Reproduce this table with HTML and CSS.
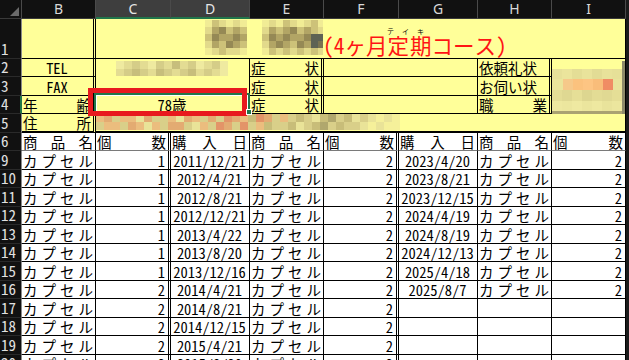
FILE: index.html
```html
<!DOCTYPE html>
<html lang="ja">
<head>
<meta charset="utf-8">
<title>Sheet</title>
<link rel="stylesheet" href="styles.css">
</head>
<body>
<div class="sheet">
  <!-- column headers -->
  <div class="ch corner"><svg width="22" height="19" viewBox="0 0 22 19"><polygon points="19,7 19,16 10,16" fill="#6b6b6b"/></svg></div>
  <div class="c ch">B</div>
  <div class="c ch sel">C</div>
  <div class="c ch sel">D</div>
  <div class="c ch">E</div>
  <div class="c ch">F</div>
  <div class="c ch">G</div>
  <div class="c ch">H</div>
  <div class="c ch">I</div>

  <!-- row 1 -->
  <div class="c rh">1</div>
  <div class="c y bd bb"></div>
  <div class="c y bb br span7 title-cell">
    <svg class="mosaic" width="227" height="38" viewBox="0 0 227 38" shape-rendering="crispEdges">
      <g>
        <rect x="109" y="1" width="7" height="7" fill="#f1ec95"/><rect x="116" y="1" width="7" height="7" fill="#cdc279"/><rect x="123" y="1" width="7" height="7" fill="#e2da8b"/><rect x="130" y="1" width="7" height="7" fill="#f1ec95"/><rect x="137" y="1" width="7" height="7" fill="#e2da8b"/><rect x="144" y="1" width="7" height="7" fill="#f1ec95"/>
        <rect x="109" y="8" width="7" height="7" fill="#e2da8b"/><rect x="116" y="8" width="7" height="7" fill="#b2a565"/><rect x="123" y="8" width="7" height="7" fill="#958955"/><rect x="130" y="8" width="7" height="7" fill="#cdc279"/><rect x="137" y="8" width="7" height="7" fill="#b2a565"/><rect x="144" y="8" width="7" height="7" fill="#cdc279"/>
        <rect x="109" y="15" width="7" height="7" fill="#cdc279"/><rect x="116" y="15" width="7" height="7" fill="#958955"/><rect x="123" y="15" width="7" height="7" fill="#b2a565"/><rect x="130" y="15" width="7" height="7" fill="#b2a565"/><rect x="137" y="15" width="7" height="7" fill="#958955"/><rect x="144" y="15" width="7" height="7" fill="#b2a565"/>
        <rect x="109" y="22" width="7" height="7" fill="#e2da8b"/><rect x="116" y="22" width="7" height="7" fill="#b2a565"/><rect x="123" y="22" width="7" height="7" fill="#cdc279"/><rect x="130" y="22" width="7" height="7" fill="#958955"/><rect x="137" y="22" width="7" height="7" fill="#b2a565"/><rect x="144" y="22" width="7" height="7" fill="#cdc279"/>
        <rect x="109" y="29" width="7" height="7" fill="#f1ec95"/><rect x="116" y="29" width="7" height="7" fill="#e2da8b"/><rect x="123" y="29" width="7" height="7" fill="#cdc279"/><rect x="130" y="29" width="7" height="7" fill="#e2da8b"/><rect x="137" y="29" width="7" height="7" fill="#e2da8b"/><rect x="144" y="29" width="7" height="7" fill="#f1ec95"/>
      </g>
      <g>
        <rect x="166" y="1" width="7" height="7" fill="#f1ec95"/><rect x="173" y="1" width="7" height="7" fill="#e2da8b"/><rect x="180" y="1" width="7" height="7" fill="#f1ec95"/><rect x="187" y="1" width="7" height="7" fill="#cdc279"/><rect x="194" y="1" width="7" height="7" fill="#e2da8b"/><rect x="201" y="1" width="7" height="7" fill="#f1ec95"/><rect x="208" y="1" width="7" height="7" fill="#e2da8b"/><rect x="215" y="1" width="7" height="7" fill="#cdc279"/><rect x="222" y="1" width="5" height="7" fill="#f1ec95"/>
        <rect x="166" y="8" width="7" height="7" fill="#e2da8b"/><rect x="173" y="8" width="7" height="7" fill="#b2a565"/><rect x="180" y="8" width="7" height="7" fill="#cdc279"/><rect x="187" y="8" width="7" height="7" fill="#b2a565"/><rect x="194" y="8" width="7" height="7" fill="#958955"/><rect x="201" y="8" width="7" height="7" fill="#cdc279"/><rect x="208" y="8" width="7" height="7" fill="#b2a565"/><rect x="215" y="8" width="7" height="7" fill="#cdc279"/><rect x="222" y="8" width="5" height="7" fill="#e2da8b"/>
        <rect x="166" y="15" width="7" height="7" fill="#cdc279"/><rect x="173" y="15" width="7" height="7" fill="#958955"/><rect x="180" y="15" width="7" height="7" fill="#b2a565"/><rect x="187" y="15" width="7" height="7" fill="#958955"/><rect x="194" y="15" width="7" height="7" fill="#b2a565"/><rect x="201" y="15" width="7" height="7" fill="#b2a565"/><rect x="208" y="15" width="7" height="7" fill="#958955"/><rect x="215" y="15" width="7" height="7" fill="#5e6254"/><rect x="222" y="15" width="5" height="7" fill="#5e6254"/>
        <rect x="166" y="22" width="7" height="7" fill="#e2da8b"/><rect x="173" y="22" width="7" height="7" fill="#b2a565"/><rect x="180" y="22" width="7" height="7" fill="#958955"/><rect x="187" y="22" width="7" height="7" fill="#b2a565"/><rect x="194" y="22" width="7" height="7" fill="#cdc279"/><rect x="201" y="22" width="7" height="7" fill="#958955"/><rect x="208" y="22" width="7" height="7" fill="#b2a565"/><rect x="215" y="22" width="7" height="7" fill="#5e6254"/><rect x="222" y="22" width="5" height="7" fill="#7a7350"/>
        <rect x="166" y="29" width="7" height="7" fill="#f1ec95"/><rect x="173" y="29" width="7" height="7" fill="#cdc279"/><rect x="180" y="29" width="7" height="7" fill="#e2da8b"/><rect x="187" y="29" width="7" height="7" fill="#cdc279"/><rect x="194" y="29" width="7" height="7" fill="#e2da8b"/><rect x="201" y="29" width="7" height="7" fill="#cdc279"/><rect x="208" y="29" width="7" height="7" fill="#e2da8b"/><rect x="215" y="29" width="7" height="7" fill="#cdc279"/><rect x="222" y="29" width="5" height="7" fill="#e2da8b"/>
      </g>
    </svg>
    <span class="title">(4ヶ月<ruby>定期<rt>テイキ</rt></ruby>コース)</span>
  </div>

  <!-- row 2 -->
  <div class="c rh">2</div>
  <div class="c y bd bb ctr">TEL</div>
  <div class="c y br span2 m">
    <svg width="153" height="18" viewBox="0 0 153 18" shape-rendering="crispEdges">
      <rect x="20" y="2" width="8" height="8" fill="#efeaa0"/><rect x="28" y="2" width="8" height="8" fill="#e3dc93"/><rect x="36" y="2" width="8" height="8" fill="#d5cd88"/><rect x="44" y="2" width="8" height="8" fill="#e3dc93"/><rect x="52" y="2" width="8" height="8" fill="#efeaa0"/><rect x="60" y="2" width="8" height="8" fill="#d5cd88"/><rect x="68" y="2" width="8" height="8" fill="#e3dc93"/><rect x="76" y="2" width="8" height="8" fill="#c7be7c"/><rect x="84" y="2" width="8" height="8" fill="#e3dc93"/><rect x="92" y="2" width="8" height="8" fill="#d5cd88"/><rect x="100" y="2" width="8" height="8" fill="#efeaa0"/><rect x="108" y="2" width="8" height="8" fill="#e3dc93"/><rect x="116" y="2" width="8" height="8" fill="#d5cd88"/><rect x="124" y="2" width="8" height="8" fill="#efeaa0"/>
      <rect x="20" y="10" width="8" height="7" fill="#e3dc93"/><rect x="28" y="10" width="8" height="7" fill="#d5cd88"/><rect x="36" y="10" width="8" height="7" fill="#c7be7c"/><rect x="44" y="10" width="8" height="7" fill="#d5cd88"/><rect x="52" y="10" width="8" height="7" fill="#e3dc93"/><rect x="60" y="10" width="8" height="7" fill="#c7be7c"/><rect x="68" y="10" width="8" height="7" fill="#d5cd88"/><rect x="76" y="10" width="8" height="7" fill="#e3dc93"/><rect x="84" y="10" width="8" height="7" fill="#d5cd88"/><rect x="92" y="10" width="8" height="7" fill="#c7be7c"/><rect x="100" y="10" width="8" height="7" fill="#e3dc93"/><rect x="108" y="10" width="8" height="7" fill="#d5cd88"/><rect x="116" y="10" width="8" height="7" fill="#e3dc93"/><rect x="124" y="10" width="8" height="7" fill="#efeaa0"/>
    </svg>
  </div>
  <div class="c y bd bb dist"><span>症</span><span>状</span></div>
  <div class="c y br bb span2"></div>
  <div class="c y bd bb">依頼礼状</div>
  <div class="c y br rows3 m">
    <svg width="73" height="55" viewBox="0 0 73 55" shape-rendering="crispEdges">
      <rect x="0" y="10" width="10" height="10" fill="#e7e199"/><rect x="10" y="10" width="10" height="10" fill="#ebe59c"/><rect x="20" y="10" width="10" height="10" fill="#e4de96"/><rect x="30" y="10" width="10" height="10" fill="#e9e39b"/><rect x="40" y="10" width="10" height="10" fill="#e2dc95"/><rect x="50" y="10" width="10" height="10" fill="#e8e29a"/><rect x="60" y="10" width="10" height="10" fill="#e6e098"/>
      <rect x="0" y="20" width="11" height="11" fill="#ebe59b"/><rect x="11" y="20" width="10" height="11" fill="#f6c98a"/><rect x="21" y="20" width="10" height="11" fill="#fbc27e"/><rect x="31" y="20" width="10" height="11" fill="#fdc583"/><rect x="41" y="20" width="10" height="11" fill="#f9bd7a"/><rect x="51" y="20" width="10" height="11" fill="#f08c64"/><rect x="61" y="20" width="9" height="11" fill="#e9e39b"/>
      <rect x="0" y="31" width="10" height="11" fill="#e4dd96"/><rect x="10" y="31" width="10" height="11" fill="#dfd892"/><rect x="20" y="31" width="10" height="11" fill="#e6df97"/><rect x="30" y="31" width="10" height="11" fill="#ddd690"/><rect x="40" y="31" width="10" height="11" fill="#e3dc95"/><rect x="50" y="31" width="10" height="11" fill="#e0d993"/><rect x="60" y="31" width="10" height="11" fill="#e5de96"/>
      <rect x="0" y="42" width="10" height="10" fill="#eee8a0"/><rect x="10" y="42" width="10" height="10" fill="#ece69e"/><rect x="20" y="42" width="10" height="10" fill="#efe9a1"/><rect x="30" y="42" width="10" height="10" fill="#ebe59d"/><rect x="40" y="42" width="10" height="10" fill="#eee8a0"/><rect x="50" y="42" width="10" height="10" fill="#e9e39b"/><rect x="60" y="42" width="10" height="10" fill="#ece69e"/>
      <rect x="0" y="52" width="70" height="3" fill="#aaa272"/>
      <rect x="70" y="2" width="3" height="53" fill="#8d8a6a"/>
    </svg>
  </div>

  <!-- row 3 -->
  <div class="c rh">3</div>
  <div class="c y bd bb ctr">FAX</div>
  <div class="c y br bb span2"></div>
  <div class="c y bd bb dist"><span>症</span><span>状</span></div>
  <div class="c y br bb span2"></div>
  <div class="c y bd bb">お伺い状</div>

  <!-- row 4 -->
  <div class="c rh rsel">4</div>
  <div class="c y bd bb dist"><span>年</span><span>齢</span></div>
  <div class="c y br bb span2 ctr">78歳</div>
  <div class="c y bd bb dist"><span>症</span><span>状</span></div>
  <div class="c y br bb span2"></div>
  <div class="c y bd bb dist"><span>職</span><span>業</span></div>

  <!-- row 5 -->
  <div class="c rh">5</div>
  <div class="c y bd bb2 dist"><span>住</span><span>所</span></div>
  <div class="c y br bb2 span7 m">
    <svg width="306" height="16" viewBox="0 0 306 16" shape-rendering="crispEdges">
      <g>
        <rect x="0" y="0" width="8" height="8" fill="#ebbd7e"/><rect x="8" y="0" width="8" height="8" fill="#e3ab72"/><rect x="16" y="0" width="8" height="8" fill="#d9cf89"/><rect x="24" y="0" width="8" height="8" fill="#ebbd7e"/><rect x="32" y="0" width="8" height="8" fill="#ebbd7e"/><rect x="40" y="0" width="8" height="8" fill="#e9e398"/><rect x="48" y="0" width="8" height="8" fill="#e3ab72"/><rect x="56" y="0" width="8" height="8" fill="#d9cf89"/><rect x="64" y="0" width="8" height="8" fill="#d9cf89"/><rect x="72" y="0" width="8" height="8" fill="#ebbd7e"/><rect x="80" y="0" width="8" height="8" fill="#e9e398"/><rect x="88" y="0" width="8" height="8" fill="#e3ab72"/><rect x="96" y="0" width="8" height="8" fill="#ebbd7e"/><rect x="104" y="0" width="8" height="8" fill="#d9cf89"/><rect x="112" y="0" width="8" height="8" fill="#e3ab72"/><rect x="120" y="0" width="8" height="8" fill="#d9cf89"/><rect x="128" y="0" width="8" height="8" fill="#e39468"/><rect x="136" y="0" width="8" height="8" fill="#e3ab72"/><rect x="144" y="0" width="8" height="8" fill="#ebbd7e"/><rect x="152" y="0" width="8" height="8" fill="#c8bd79"/><rect x="160" y="0" width="8" height="8" fill="#e39468"/><rect x="168" y="0" width="8" height="8" fill="#e3ab72"/><rect x="176" y="0" width="8" height="8" fill="#d9cf89"/><rect x="184" y="0" width="8" height="8" fill="#ebbd7e"/><rect x="192" y="0" width="8" height="8" fill="#d9cf89"/><rect x="200" y="0" width="8" height="8" fill="#c8bd79"/><rect x="208" y="0" width="8" height="8" fill="#d9cf89"/><rect x="216" y="0" width="8" height="8" fill="#e9e398"/><rect x="224" y="0" width="8" height="8" fill="#c8bd79"/><rect x="232" y="0" width="8" height="8" fill="#b0a76d"/><rect x="240" y="0" width="8" height="8" fill="#d9cf89"/><rect x="248" y="0" width="8" height="8" fill="#c8bd79"/><rect x="256" y="0" width="8" height="8" fill="#e9e398"/><rect x="264" y="0" width="8" height="8" fill="#d9cf89"/><rect x="272" y="0" width="8" height="8" fill="#e9e398"/><rect x="280" y="0" width="8" height="8" fill="#f5f09a"/><rect x="288" y="0" width="8" height="8" fill="#e9e398"/><rect x="296" y="0" width="8" height="8" fill="#f5f09a"/>
      </g>
      <g>
        <rect x="0" y="8" width="8" height="8" fill="#d9cf89"/><rect x="8" y="8" width="8" height="8" fill="#ebbd7e"/><rect x="16" y="8" width="8" height="8" fill="#ebbd7e"/><rect x="24" y="8" width="8" height="8" fill="#d9cf89"/><rect x="32" y="8" width="8" height="8" fill="#e3ab72"/><rect x="40" y="8" width="8" height="8" fill="#ebbd7e"/><rect x="48" y="8" width="8" height="8" fill="#e9e398"/><rect x="56" y="8" width="8" height="8" fill="#ebbd7e"/><rect x="64" y="8" width="8" height="8" fill="#d9cf89"/><rect x="72" y="8" width="8" height="8" fill="#e3ab72"/><rect x="80" y="8" width="8" height="8" fill="#e3ab72"/><rect x="88" y="8" width="8" height="8" fill="#d9cf89"/><rect x="96" y="8" width="8" height="8" fill="#e9e398"/><rect x="104" y="8" width="8" height="8" fill="#ebbd7e"/><rect x="112" y="8" width="8" height="8" fill="#d9cf89"/><rect x="120" y="8" width="8" height="8" fill="#e39468"/><rect x="128" y="8" width="8" height="8" fill="#e3ab72"/><rect x="136" y="8" width="8" height="8" fill="#d9cf89"/><rect x="144" y="8" width="8" height="8" fill="#e39468"/><rect x="152" y="8" width="8" height="8" fill="#d9cf89"/><rect x="160" y="8" width="8" height="8" fill="#ebbd7e"/><rect x="168" y="8" width="8" height="8" fill="#c8bd79"/><rect x="176" y="8" width="8" height="8" fill="#d9cf89"/><rect x="184" y="8" width="8" height="8" fill="#d9cf89"/><rect x="192" y="8" width="8" height="8" fill="#c8bd79"/><rect x="200" y="8" width="8" height="8" fill="#e9e398"/><rect x="208" y="8" width="8" height="8" fill="#d9cf89"/><rect x="216" y="8" width="8" height="8" fill="#c8bd79"/><rect x="224" y="8" width="8" height="8" fill="#b0a76d"/><rect x="232" y="8" width="8" height="8" fill="#d9cf89"/><rect x="240" y="8" width="8" height="8" fill="#c8bd79"/><rect x="248" y="8" width="8" height="8" fill="#d9cf89"/><rect x="256" y="8" width="8" height="8" fill="#d9cf89"/><rect x="264" y="8" width="8" height="8" fill="#e9e398"/><rect x="272" y="8" width="8" height="8" fill="#f5f09a"/><rect x="280" y="8" width="8" height="8" fill="#e9e398"/><rect x="288" y="8" width="8" height="8" fill="#f5f09a"/><rect x="296" y="8" width="8" height="8" fill="#f5f09a"/>
      </g>
    </svg>
  </div>

  <!-- row 6 -->
  <div class="c rh">6</div>
  <div class="c w br bg dist"><span>商</span><span>品</span><span>名</span></div>
  <div class="c w bd bg dist"><span>個</span><span>数</span></div>
  <div class="c w br bg dist"><span>購</span><span>入</span><span>日</span></div>
  <div class="c w br bg dist"><span>商</span><span>品</span><span>名</span></div>
  <div class="c w bd bg dist"><span>個</span><span>数</span></div>
  <div class="c w br bg dist"><span>購</span><span>入</span><span>日</span></div>
  <div class="c w br bg dist"><span>商</span><span>品</span><span>名</span></div>
  <div class="c w br bg dist"><span>個</span><span>数</span></div>

  <!-- row 9 -->
  <div class="c rh">9</div>
  <div class="c w br bb dist"><span>カ</span><span>プ</span><span>セ</span><span>ル</span></div>
  <div class="c w bd bb rt">1</div>
  <div class="c w br bb ctr">2011/12/21</div>
  <div class="c w br bb dist"><span>カ</span><span>プ</span><span>セ</span><span>ル</span></div>
  <div class="c w bd bb rt">2</div>
  <div class="c w br bb ctr">2023/4/20</div>
  <div class="c w br bb dist"><span>カ</span><span>プ</span><span>セ</span><span>ル</span></div>
  <div class="c w br bb rt">2</div>

  <!-- row 10 -->
  <div class="c rh">10</div>
  <div class="c w br bb dist"><span>カ</span><span>プ</span><span>セ</span><span>ル</span></div>
  <div class="c w bd bb rt">1</div>
  <div class="c w br bb ctr">2012/4/21</div>
  <div class="c w br bb dist"><span>カ</span><span>プ</span><span>セ</span><span>ル</span></div>
  <div class="c w bd bb rt">2</div>
  <div class="c w br bb ctr">2023/8/21</div>
  <div class="c w br bb dist"><span>カ</span><span>プ</span><span>セ</span><span>ル</span></div>
  <div class="c w br bb rt">2</div>

  <!-- row 11 -->
  <div class="c rh">11</div>
  <div class="c w br bb dist"><span>カ</span><span>プ</span><span>セ</span><span>ル</span></div>
  <div class="c w bd bb rt">1</div>
  <div class="c w br bb ctr">2012/8/21</div>
  <div class="c w br bb dist"><span>カ</span><span>プ</span><span>セ</span><span>ル</span></div>
  <div class="c w bd bb rt">2</div>
  <div class="c w br bb ctr">2023/12/15</div>
  <div class="c w br bb dist"><span>カ</span><span>プ</span><span>セ</span><span>ル</span></div>
  <div class="c w br bb rt">2</div>

  <!-- row 12 -->
  <div class="c rh">12</div>
  <div class="c w br bb dist"><span>カ</span><span>プ</span><span>セ</span><span>ル</span></div>
  <div class="c w bd bb rt">1</div>
  <div class="c w br bb ctr">2012/12/21</div>
  <div class="c w br bb dist"><span>カ</span><span>プ</span><span>セ</span><span>ル</span></div>
  <div class="c w bd bb rt">2</div>
  <div class="c w br bb ctr">2024/4/19</div>
  <div class="c w br bb dist"><span>カ</span><span>プ</span><span>セ</span><span>ル</span></div>
  <div class="c w br bb rt">2</div>

  <!-- row 13 -->
  <div class="c rh">13</div>
  <div class="c w br bb dist"><span>カ</span><span>プ</span><span>セ</span><span>ル</span></div>
  <div class="c w bd bb rt">1</div>
  <div class="c w br bb ctr">2013/4/22</div>
  <div class="c w br bb dist"><span>カ</span><span>プ</span><span>セ</span><span>ル</span></div>
  <div class="c w bd bb rt">2</div>
  <div class="c w br bb ctr">2024/8/19</div>
  <div class="c w br bb dist"><span>カ</span><span>プ</span><span>セ</span><span>ル</span></div>
  <div class="c w br bb rt">2</div>

  <!-- row 14 -->
  <div class="c rh">14</div>
  <div class="c w br bb dist"><span>カ</span><span>プ</span><span>セ</span><span>ル</span></div>
  <div class="c w bd bb rt">1</div>
  <div class="c w br bb ctr">2013/8/20</div>
  <div class="c w br bb dist"><span>カ</span><span>プ</span><span>セ</span><span>ル</span></div>
  <div class="c w bd bb rt">2</div>
  <div class="c w br bb ctr">2024/12/13</div>
  <div class="c w br bb dist"><span>カ</span><span>プ</span><span>セ</span><span>ル</span></div>
  <div class="c w br bb rt">2</div>

  <!-- row 15 -->
  <div class="c rh">15</div>
  <div class="c w br bb dist"><span>カ</span><span>プ</span><span>セ</span><span>ル</span></div>
  <div class="c w bd bb rt">1</div>
  <div class="c w br bb ctr">2013/12/16</div>
  <div class="c w br bb dist"><span>カ</span><span>プ</span><span>セ</span><span>ル</span></div>
  <div class="c w bd bb rt">2</div>
  <div class="c w br bb ctr">2025/4/18</div>
  <div class="c w br bb dist"><span>カ</span><span>プ</span><span>セ</span><span>ル</span></div>
  <div class="c w br bb rt">2</div>

  <!-- row 16 -->
  <div class="c rh">16</div>
  <div class="c w br bb dist"><span>カ</span><span>プ</span><span>セ</span><span>ル</span></div>
  <div class="c w bd bb rt">2</div>
  <div class="c w br bb ctr">2014/4/21</div>
  <div class="c w br bb dist"><span>カ</span><span>プ</span><span>セ</span><span>ル</span></div>
  <div class="c w bd bb rt">2</div>
  <div class="c w br bb ctr">2025/8/7</div>
  <div class="c w br bb dist"><span>カ</span><span>プ</span><span>セ</span><span>ル</span></div>
  <div class="c w br bb rt">2</div>

  <!-- row 17 -->
  <div class="c rh">17</div>
  <div class="c w br bb dist"><span>カ</span><span>プ</span><span>セ</span><span>ル</span></div>
  <div class="c w bd bb rt">2</div>
  <div class="c w br bb ctr">2014/8/21</div>
  <div class="c w br bb dist"><span>カ</span><span>プ</span><span>セ</span><span>ル</span></div>
  <div class="c w bd bb rt">2</div>
  <div class="c w br bb"></div>
  <div class="c w br bb"></div>
  <div class="c w br bb"></div>

  <!-- row 18 -->
  <div class="c rh">18</div>
  <div class="c w br bb dist"><span>カ</span><span>プ</span><span>セ</span><span>ル</span></div>
  <div class="c w bd bb rt">2</div>
  <div class="c w br bb ctr">2014/12/15</div>
  <div class="c w br bb dist"><span>カ</span><span>プ</span><span>セ</span><span>ル</span></div>
  <div class="c w bd bb rt">2</div>
  <div class="c w br bb"></div>
  <div class="c w br bb"></div>
  <div class="c w br bb"></div>

  <!-- row 19 -->
  <div class="c rh">19</div>
  <div class="c w br bb dist"><span>カ</span><span>プ</span><span>セ</span><span>ル</span></div>
  <div class="c w bd bb rt">2</div>
  <div class="c w br bb ctr">2015/4/21</div>
  <div class="c w br bb dist"><span>カ</span><span>プ</span><span>セ</span><span>ル</span></div>
  <div class="c w bd bb rt">2</div>
  <div class="c w br bb"></div>
  <div class="c w br bb"></div>
  <div class="c w br bb"></div>

  <!-- row 20 -->
  <div class="c rh">20</div>
  <div class="c w br bb dist"><span>カ</span><span>プ</span><span>セ</span><span>ル</span></div>
  <div class="c w bd bb rt">2</div>
  <div class="c w br bb ctr">2015/8/20</div>
  <div class="c w br bb dist"><span>カ</span><span>プ</span><span>セ</span><span>ル</span></div>
  <div class="c w bd bb rt">2</div>
  <div class="c w br bb"></div>
  <div class="c w br bb"></div>
  <div class="c w br bb"></div>

  <!-- overlays -->
  <div class="selbox"></div>
  <div class="redbox"></div>
  <div class="handle"></div>
</div>
</body>
</html>
```
FILE: styles.css
```css
* { box-sizing: border-box; }
html, body { margin: 0; padding: 0; }
body {
  width: 629px;
  height: 360px;
  overflow: hidden;
  background: #1a1a1a;
  font-family: "Noto Sans Mono CJK JP", "Noto Sans CJK JP", sans-serif;
  font-size: 14.5px;
  color: #000;
}
.sheet {
  position: relative;
  display: grid;
  grid-template-columns: 22px 74px 75px 79px 74px 75px 79px 74px 74px;
  grid-template-rows: 19px 39.5px repeat(17, 18.5px);
  width: 626px;
}
.c {
  display: flex;
  align-items: flex-end;
  white-space: nowrap;
  line-height: 17px;
  padding: 0 2px 0 1px;
  min-width: 0;
}
.y { background: #ffff99; }
.w { background: #ffffff; }
.br { border-right: 1px solid #000; }
.bd { border-right: 3px double #000; }
.bb { border-bottom: 1px solid #000; }
.bb2 { border-bottom: 2px solid #000; }
.bg { border-bottom: 1px solid #7a7a7a; }
.dist { justify-content: space-between; }
.ctr { justify-content: center; }
.rt { justify-content: flex-end; padding-right: 3px; }
.span2 { grid-column: span 2; }
.span7 { grid-column: span 7; }
.rows3 { grid-row: span 3; }
.m { padding: 0; align-items: flex-start; overflow: hidden; }

.ch {
  background: #111111;
  color: #d8d8d8;
  font-family: "Noto Sans", "DejaVu Sans", sans-serif;
  font-size: 14px;
  justify-content: center;
  align-items: center;
  line-height: 18px;
  padding: 0;
  border-right: 1px solid #4a4a4a;
  border-bottom: 1px solid #3a3a3a;
}
.ch.sel {
  background: #3e3e3e;
  color: #e6e6e6;
  border-bottom: 2px solid #21764a;
}
.corner { display: block; border-right: 1px solid #4a4a4a; }
.corner svg { display: block; }

.rh {
  background: #111111;
  color: #e0e0e0;
  font-size: 15px;
  padding: 0 0 1px 1px;
  border-right: 1px solid #8a8a8a;
  border-bottom: 1px solid #2a2a2a;
}
.rh.rsel { border-right: 2px solid #21764a; }

.title-cell { padding: 0 0 1px 0; align-items: flex-end; overflow: hidden; }
.mosaic { display: block; align-self: flex-start; flex: none; }
.title {
  color: #ff1414;
  font-family: "Noto Sans Mono CJK JP", "Noto Sans CJK JP", sans-serif;
  font-size: 21.5px;
  line-height: 24px;
}
.title rt {
  color: #000;
  font-size: 7px;
  line-height: 8px;
  letter-spacing: 8px;
  text-indent: 8px;
}

.selbox {
  position: absolute;
  left: 94px;
  top: 93px;
  width: 156px;
  height: 21px;
  border: 2px solid #21764a;
  box-shadow: inset 0 0 0 1px #ffffff;
}
.redbox {
  position: absolute;
  left: 88px;
  top: 88px;
  width: 159px;
  height: 28px;
  border: 5px solid #e8191e;
}
.handle {
  position: absolute;
  left: 246px;
  top: 109px;
  width: 6px;
  height: 6px;
  background: #21764a;
  border: 1px solid #ffffff;
}
```
